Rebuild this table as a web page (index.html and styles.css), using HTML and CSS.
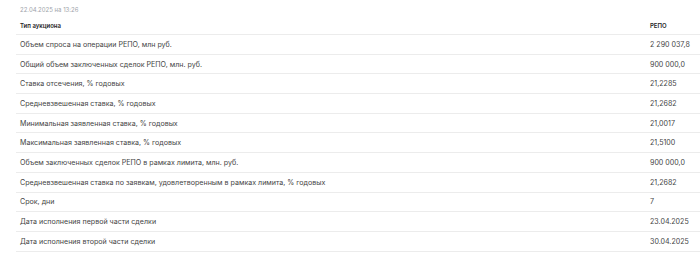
FILE: index.html
```html
<!DOCTYPE html>
<html lang="ru">
<head>
<meta charset="utf-8">
<link rel="stylesheet" href="styles.css">
</head>
<body>
<div class="wrap">
  <div class="date">22.04.2025 на 13:26</div>
  <table class="tbl">
    <thead>
      <tr><th>Тип аукциона</th><th class="val">РЕПО</th></tr>
    </thead>
    <tbody>
      <tr><td>Объем спроса на операции РЕПО, млн руб.</td><td class="val">2 290 037,8</td></tr>
      <tr><td>Общий объем заключенных сделок РЕПО, млн. руб.</td><td class="val">900 000,0</td></tr>
      <tr><td>Ставка отсечения, % годовых</td><td class="val">21,2285</td></tr>
      <tr><td>Средневзвешенная ставка, % годовых</td><td class="val">21,2682</td></tr>
      <tr><td>Минимальная заявленная ставка, % годовых</td><td class="val">21,0017</td></tr>
      <tr><td>Максимальная заявленная ставка, % годовых</td><td class="val">21,5100</td></tr>
      <tr><td>Объем заключенных сделок РЕПО в рамках лимита, млн. руб.</td><td class="val">900 000,0</td></tr>
      <tr><td>Средневзвешенная ставка по заявкам, удовлетворенным в рамках лимита, % годовых</td><td class="val">21,2682</td></tr>
      <tr><td>Срок, дни</td><td class="val">7</td></tr>
      <tr><td>Дата исполнения первой части сделки</td><td class="val">23.04.2025</td></tr>
      <tr><td>Дата исполнения второй части сделки</td><td class="val">30.04.2025</td></tr>
    </tbody>
  </table>
</div>
</body>
</html>
```
FILE: styles.css
```css
html, body { margin: 0; padding: 0; background: #fff; }
body { font-family: Inter, "Noto Sans", sans-serif; color: #444; }
.wrap { padding: 5px 0 0 16px; }
.date { font-size: 6px; color: #a0a4aa; padding-left: 4px; height: 12px; line-height: 10px; }
.tbl { border-collapse: collapse; width: 100%; table-layout: fixed; }
.tbl th { font-size: 6px; font-weight: 600; color: #1f1f1f; text-align: left; height: 17px; padding: 0 0 0 4px; border-bottom: 1px solid #ececec; }
.tbl td { font-size: 7.1px; height: 18.7px; padding: 0 0 0 4px; border-bottom: 1px solid #ececec; white-space: nowrap; }
.tbl .val { width: 50px; }
```
